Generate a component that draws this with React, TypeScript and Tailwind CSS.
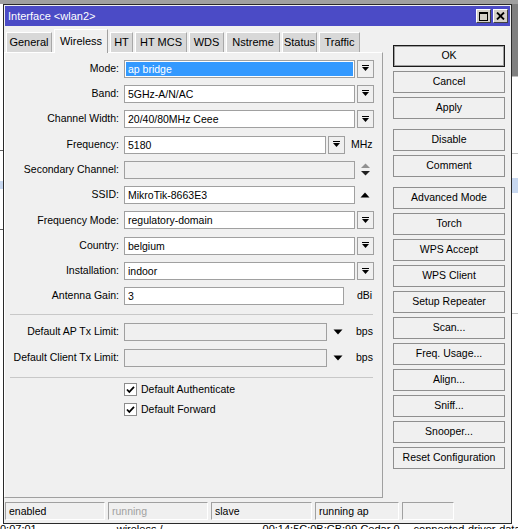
import React from "react";

const tabs: [string, number][] = [
  ["General", 46],
  ["Wireless", 54],
  ["HT", 23],
  ["HT MCS", 52],
  ["WDS", 35],
  ["Nstreme", 54],
  ["Status", 35],
  ["Traffic", 41],
];

const buttons: (string | null)[] = [
  "OK",
  "Cancel",
  "Apply",
  null,
  "Disable",
  "Comment",
  null,
  "Advanced Mode",
  "Torch",
  "WPS Accept",
  "WPS Client",
  "Setup Repeater",
  "Scan...",
  "Freq. Usage...",
  "Align...",
  "Sniff...",
  "Snooper...",
  "Reset Configuration",
];

const DropIcon = () => (
  <svg width="7" height="7" viewBox="0 0 7 7">
    <rect x="0" y="0" width="7" height="1" fill="#000" />
    <polygon points="0,2 7,2 3.5,6" fill="#000" />
  </svg>
);

const DropButton = () => (
  <div className="ml-[2px] flex h-[18px] w-[17px] items-center justify-center border border-[#a0a0a0] bg-[#f0f0f0]">
    <DropIcon />
  </div>
);

const Input = ({ w, value, disabled }: { w: number; value?: string; disabled?: boolean }) => (
  <div
    className={`h-[18px] truncate border border-[#a0a0a0] pl-[3px] leading-[16px] ${
      disabled ? "bg-[#f0f0f0]" : "bg-white"
    }`}
    style={{ width: w }}
  >
    {value}
  </div>
);

const Row = ({ label, h = "h-[25.3px]", children }: { label: string; h?: string; children: React.ReactNode }) => (
  <div className={`flex items-center ${h}`}>
    <div className="w-[114px] text-right">{label}</div>
    <div className="ml-[5px] flex items-center">{children}</div>
  </div>
);

const Check = ({ label }: { label: string }) => (
  <div className="flex h-[20px] items-center pl-[119px]">
    <div className="flex h-[13px] w-[13px] items-center justify-center border border-[#8c8c8c] bg-white">
      <svg width="9" height="9" viewBox="0 0 9 9">
        <path d="M1 4.5 L3.3 7 L8 1.8" stroke="#000" strokeWidth="1.8" fill="none" />
      </svg>
    </div>
    <span className="ml-[4px]">{label}</span>
  </div>
);

const Separator = ({ mt }: { mt: string }) => <div className={`mx-[5px] mr-[9px] h-px bg-[#c8c8c8] ${mt}`} />;

export default function App() {
  return (
    <div className="flex h-[529px] w-[518px] flex-col overflow-hidden bg-white font-['Liberation_Sans',Arial,sans-serif] text-[10.5px] text-black">
      <div className="h-[4px] shrink-0 bg-[#a0a0a0]" />
      <div className="flex shrink-0">
        {/* left edge of window behind */}
        <div className="flex w-[3px] flex-col bg-white">
          <div className="mt-[146px] h-px bg-[#606060]" />
          <div className="mt-[30px] h-[8px] bg-[#c8d8f0]" />
          <div className="mt-[40px] h-px bg-[#606060]" />
        </div>

        <div className="flex h-[520px] w-[509px] flex-col border border-[#2a2a2a] bg-[#f0f0f0]">
          {/* title bar */}
          <div className="mx-[1px] mt-[1px] flex h-[20px] items-center bg-[#4b4bc6] pl-[3px] pr-[2px] text-[11px] text-white">
            <span>Interface &lt;wlan2&gt;</span>
            <div className="ml-auto flex gap-[2px]">
              <div className="flex h-[14px] w-[15px] items-center justify-center border border-b-[#404040] border-l-white border-r-[#404040] border-t-white bg-[#d4d0c8]">
                <svg width="9" height="9" viewBox="0 0 9 9">
                  <rect x="0.5" y="0.5" width="8" height="8" fill="none" stroke="#000" />
                  <rect x="0" y="0" width="9" height="2" fill="#000" />
                </svg>
              </div>
              <div className="flex h-[14px] w-[15px] items-center justify-center border border-b-[#404040] border-l-white border-r-[#404040] border-t-white bg-[#d4d0c8]">
                <svg width="9" height="8" viewBox="0 0 9 8">
                  <path d="M1 0.5 L8 7.5 M8 0.5 L1 7.5" stroke="#000" strokeWidth="1.8" />
                </svg>
              </div>
            </div>
          </div>

          <div className="flex flex-1">
            {/* tabs + panel */}
            <div className="flex w-[379px] flex-col">
              <div className="mt-[3px] flex h-[24px] items-end gap-[2px] pl-[2px] text-[11px]">
                {tabs.map(([name, w]) =>
                  name === "Wireless" ? (
                    <div
                      key={name}
                      className="relative z-10 flex h-[24px] items-center justify-center border-l border-r border-t border-l-white border-r-[#a0a0a0] border-t-white bg-[#f0f0f0]"
                      style={{ width: w }}
                    >
                      {name}
                    </div>
                  ) : (
                    <div
                      key={name}
                      className="mb-[1px] flex h-[20px] items-center justify-center border-l border-r border-t border-l-white border-r-[#a8a8a8] border-t-white bg-[#d8d8d8]"
                      style={{ width: w }}
                    >
                      {name}
                    </div>
                  )
                )}
              </div>

              <div className="-mt-[1px] flex h-[446px] flex-col border border-b-[#a0a0a0] border-l-white border-r-[#a0a0a0] border-t-white pt-[3px]">
                <Row label="Mode:">
                  <div className="h-[18px] w-[231px] border border-[#a0a0a0] bg-white p-px">
                    <div className="h-full bg-[#3399ff] pl-[2px] leading-[14px] text-white">ap bridge</div>
                  </div>
                  <DropButton />
                </Row>
                <Row label="Band:">
                  <Input w={231} value="5GHz-A/N/AC" />
                  <DropButton />
                </Row>
                <Row label="Channel Width:">
                  <Input w={231} value="20/40/80MHz Ceee" />
                  <DropButton />
                </Row>
                <Row label="Frequency:">
                  <Input w={202} value="5180" />
                  <DropButton />
                  <span className="ml-[6px]">MHz</span>
                </Row>
                <Row label="Secondary Channel:">
                  <Input w={231} disabled />
                  <svg className="ml-[5px]" width="11" height="13" viewBox="0 0 11 13">
                    <polygon points="1,5 10,5 5.5,0.5" fill="#909090" />
                    <polygon points="1,8 10,8 5.5,12.5" fill="#202020" />
                  </svg>
                </Row>
                <Row label="SSID:">
                  <Input w={231} value="MikroTik-8663E3" />
                  <svg className="ml-[5px]" width="10" height="6" viewBox="0 0 10 6">
                    <polygon points="0.5,5.5 9.5,5.5 5,0.5" fill="#000" />
                  </svg>
                </Row>
                <Row label="Frequency Mode:">
                  <Input w={231} value="regulatory-domain" />
                  <DropButton />
                </Row>
                <Row label="Country:">
                  <Input w={231} value="belgium" />
                  <DropButton />
                </Row>
                <Row label="Installation:">
                  <Input w={231} value="indoor" />
                  <DropButton />
                </Row>
                <Row label="Antenna Gain:">
                  <Input w={220} value="3" />
                  <span className="ml-auto pl-[13px]">dBi</span>
                </Row>

                <Separator mt="mt-[5px]" />

                <div className="mt-[4px]">
                  <Row label="Default AP Tx Limit:" h="h-[26px]">
                    <Input w={203} disabled />
                    <svg className="ml-[6px]" width="10" height="6" viewBox="0 0 10 6">
                      <polygon points="0.5,0.5 9.5,0.5 5,5.5" fill="#000" />
                    </svg>
                    <span className="ml-[13px]">bps</span>
                  </Row>
                  <Row label="Default Client Tx Limit:" h="h-[26px]">
                    <Input w={203} disabled />
                    <svg className="ml-[6px]" width="10" height="6" viewBox="0 0 10 6">
                      <polygon points="0.5,0.5 9.5,0.5 5,5.5" fill="#000" />
                    </svg>
                    <span className="ml-[13px]">bps</span>
                  </Row>
                </div>

                <Separator mt="mt-[6px]" />

                <div className="mt-[2px]">
                  <Check label="Default Authenticate" />
                  <Check label="Default Forward" />
                </div>
              </div>
            </div>

            {/* buttons */}
            <div className="ml-[10px] mt-[19px] flex w-[112px] flex-col">
              {buttons.map((b, i) =>
                b === null ? (
                  <div key={i} className="h-[6px]" />
                ) : (
                  <div
                    key={i}
                    className={`mb-[4px] flex h-[22px] items-center justify-center border bg-[#f0f0f0] ${
                      b === "OK" ? "border-[#1a1a1a] shadow-[inset_0_0_0_1px_#a0a0a0]" : "border-[#8f8f8f]"
                    }`}
                  >
                    {b}
                  </div>
                )
              )}
            </div>
          </div>

          {/* status bar */}
          <div className="mb-[3px] ml-[1px] mt-[4px] flex h-[18px] gap-[3px]">
            {[
              ["enabled", 100],
              ["running", 100],
              ["slave", 101],
              ["running ap", 84],
              ["", 52],
            ].map(([t, w], i) => (
              <div
                key={i}
                className={`border border-b-white border-l-[#a0a0a0] border-r-white border-t-[#a0a0a0] pl-[3px] leading-[16px] ${
                  i === 1 ? "text-[#a0a0a0]" : ""
                }`}
                style={{ width: w as number }}
              >
                {t}
              </div>
            ))}
          </div>
        </div>

        {/* right edge of window behind */}
        <div className="flex flex-1 flex-col bg-white">
          <div className="h-[72px] bg-[#808080]" />
          <div className="h-px bg-[#c0c0c0]" />
          <div className="mt-[76px] h-px bg-[#c0c0c0]" />
          <div className="mt-[24px] h-[15px] bg-[#c8d8f0]" />
          <div className="mt-[120px] h-px bg-[#c0c0c0]" />
        </div>
      </div>

      {/* row of the list behind, only its top shows under the window */}
      <div className="flex h-[5px] shrink-0 items-start overflow-hidden whitespace-nowrap text-[11px] leading-[11px]">
        <span>0:07:01</span>
        <span className="ml-[80px]">wireless /</span>
        <span className="ml-[100px]">00:14:5C:0B:CB:99 Cedar 0</span>
        <span className="ml-[14px]">connected-driver-data the 17</span>
      </div>
    </div>
  );
}
